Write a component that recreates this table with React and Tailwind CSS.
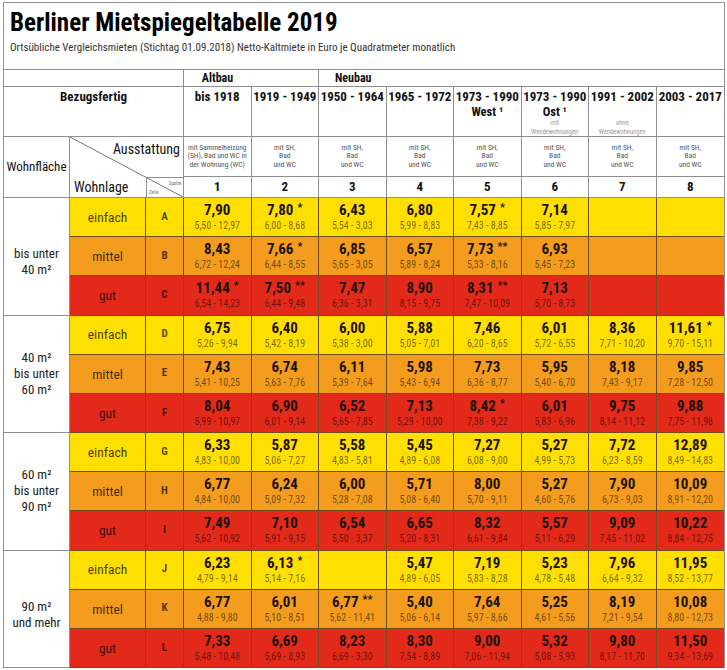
const YEARS = [
  { y: "bis 1918" },
  { y: "1919 - 1949" },
  { y: "1950 - 1964" },
  { y: "1965 - 1972" },
  { y: "1973 - 1990", sub: "West ¹" },
  { y: "1973 - 1990", sub: "Ost ¹", note: "mit" },
  { y: "1991 - 2002", note: "ohne" },
  { y: "2003 - 2017" },
];

const LAGE = {
  einfach: "bg-[#FFDF00]",
  mittel: "bg-[#F39C1E]",
  gut: "bg-[#E3291A]",
};

// [wert, sterne, spanne]
const GROUPS = [
  {
    label: ["bis unter", "40 m²"],
    rows: [
      ["einfach", "A", [["7,90", "", "5,50 - 12,97"], ["7,80", "*", "6,00 - 8,68"], ["6,43", "", "5,54 - 3,03"], ["6,80", "", "5,99 - 8,83"], ["7,57", "*", "7,43 - 8,85"], ["7,14", "", "5,85 - 7,97"], null, null]],
      ["mittel", "B", [["8,43", "", "6,72 - 12,24"], ["7,66", "*", "6,44 - 8,55"], ["6,85", "", "5,65 - 3,05"], ["6,57", "", "5,89 - 8,24"], ["7,73", "**", "5,33 - 8,16"], ["6,93", "", "5,45 - 7,23"], null, null]],
      ["gut", "C", [["11,44", "*", "6,54 - 14,23"], ["7,50", "**", "6,44 - 9,48"], ["7,47", "", "6,36 - 3,31"], ["8,90", "", "8,15 - 9,75"], ["8,31", "**", "7,47 - 10,09"], ["7,13", "", "5,70 - 8,73"], null, null]],
    ],
  },
  {
    label: ["40 m²", "bis unter", "60 m²"],
    rows: [
      ["einfach", "D", [["6,75", "", "5,26 - 9,94"], ["6,40", "", "5,42 - 8,19"], ["6,00", "", "5,38 - 3,00"], ["5,88", "", "5,05 - 7,01"], ["7,46", "", "6,20 - 8,65"], ["6,01", "", "5,72 - 6,55"], ["8,36", "", "7,71 - 10,20"], ["11,61", "*", "9,70 - 15,11"]]],
      ["mittel", "E", [["7,43", "", "5,41 - 10,25"], ["6,74", "", "5,63 - 7,76"], ["6,11", "", "5,39 - 7,64"], ["5,98", "", "5,43 - 6,94"], ["7,73", "", "6,36 - 8,77"], ["5,95", "", "5,40 - 6,70"], ["8,18", "", "7,43 - 9,17"], ["9,85", "", "7,28 - 12,50"]]],
      ["gut", "F", [["8,04", "", "5,99 - 10,97"], ["6,90", "", "6,01 - 9,14"], ["6,52", "", "5,65 - 7,85"], ["7,13", "", "5,29 - 10,00"], ["8,42", "*", "7,38 - 9,22"], ["6,01", "", "5,83 - 6,96"], ["9,75", "", "8,14 - 11,12"], ["9,88", "", "7,75 - 11,98"]]],
    ],
  },
  {
    label: ["60 m²", "bis unter", "90 m²"],
    rows: [
      ["einfach", "G", [["6,33", "", "4,83 - 10,00"], ["5,87", "", "5,06 - 7,27"], ["5,58", "", "4,83 - 5,81"], ["5,45", "", "4,89 - 6,08"], ["7,27", "", "6,08 - 9,00"], ["5,27", "", "4,99 - 5,73"], ["7,72", "", "6,23 - 8,59"], ["12,89", "", "8,49 - 14,83"]]],
      ["mittel", "H", [["6,77", "", "4,84 - 10,00"], ["6,24", "", "5,09 - 7,32"], ["6,00", "", "5,28 - 7,08"], ["5,71", "", "5,08 - 6,40"], ["8,00", "", "5,70 - 9,11"], ["5,27", "", "4,60 - 5,76"], ["7,90", "", "6,73 - 9,03"], ["10,09", "", "8,91 - 12,20"]]],
      ["gut", "I", [["7,49", "", "5,62 - 10,92"], ["7,10", "", "5,91 - 9,15"], ["6,54", "", "5,50 - 3,37"], ["6,65", "", "5,20 - 8,31"], ["8,32", "", "6,61 - 9,84"], ["5,57", "", "5,11 - 6,29"], ["9,09", "", "7,45 - 11,02"], ["10,22", "", "8,84 - 12,75"]]],
    ],
  },
  {
    label: ["90 m²", "und mehr"],
    rows: [
      ["einfach", "J", [["6,23", "", "4,79 - 9,14"], ["6,13", "*", "5,14 - 7,16"], null, ["5,47", "", "4,89 - 6,05"], ["7,19", "", "5,83 - 8,28"], ["5,23", "", "4,78 - 5,48"], ["7,96", "", "6,64 - 9,32"], ["11,95", "", "8,52 - 13,77"]]],
      ["mittel", "K", [["6,77", "", "4,88 - 9,80"], ["6,01", "", "5,10 - 8,51"], ["6,77", "**", "5,62 - 11,41"], ["5,40", "", "5,06 - 6,14"], ["7,64", "", "5,97 - 8,66"], ["5,25", "", "4,61 - 5,56"], ["8,19", "", "7,21 - 9,54"], ["10,08", "", "8,80 - 12,73"]]],
      ["gut", "L", [["7,33", "", "5,48 - 10,48"], ["6,69", "", "5,69 - 8,93"], ["8,23", "", "6,69 - 3,30"], ["8,30", "", "7,54 - 8,89"], ["9,00", "", "7,06 - 11,94"], ["5,32", "", "5,08 - 5,93"], ["9,80", "", "8,17 - 11,70"], ["11,50", "", "9,34 - 13,69"]]],
    ],
  },
];

function Wert({ cell, last, lage }) {
  const edge = last ? "" : "border-r";
  return (
    <div className={`${LAGE[lage]} ${edge} flex flex-col items-center justify-center border-b border-[#6e4d1c]`}>
      {cell && (
        <>
          <div className="text-[15px] font-bold leading-[15px] text-[#1c1208]">
            {cell[0]}
            {cell[1] && <span className="ml-[4px] align-top text-[11px] leading-[10px]">{cell[1]}</span>}
          </div>
          <div className="mt-[2px] text-[10px] leading-[11px] text-black/55">{cell[2]}</div>
        </>
      )}
    </div>
  );
}

export default function App() {
  const gray = "border-[#8f8f8f]";

  return (
    <div className="min-h-[670px] bg-white font-['Roboto_Condensed','Liberation_Sans',sans-serif] text-[#111]">
      <div className={`ml-[3px] mt-[2px] w-[722px] border-x border-t ${gray}`}>
        {/* TITEL */}
        <div className={`h-[67px] border-b ${gray} pl-[6px] pt-[6px]`}>
          <h1 className="text-[25px] font-bold leading-[28px] text-black">Berliner Mietspiegeltabelle 2019</h1>
          <p className="mt-[4px] text-[11px] leading-[14px] text-[#333]">
            Ortsübliche Vergleichsmieten (Stichtag 01.09.2018) Netto-Kaltmiete in Euro je Quadratmeter monatlich
          </p>
        </div>

        {/* TABELLE */}
        <div className="grid h-[598px] grid-cols-[66px_76px_38px_repeat(8,minmax(0,1fr))] grid-rows-[17px_50px_40px_21px_repeat(12,minmax(0,1fr))]">
          {/* Zeile 1: Altbau / Neubau */}
          <div className={`col-span-3 border-r border-b ${gray}`} />
          <div className={`col-span-2 flex items-center border-r border-b ${gray}`}>
            <span className="w-1/2 text-center text-[12px] font-bold">Altbau</span>
          </div>
          <div className={`col-span-6 flex items-center border-b ${gray} pl-[16px] text-[12px] font-bold`}>Neubau</div>

          {/* Zeile 2: Bezugsfertig */}
          <div className={`col-span-3 border-r border-b ${gray} pt-[3px] text-center text-[13px] font-bold leading-[14px]`}>
            Bezugsfertig
          </div>
          {YEARS.map((c, i) => (
            <div
              key={i}
              className={`flex flex-col items-center ${i < 7 ? "border-r" : ""} border-b ${gray} pt-[2px] text-center`}
            >
              <div className="whitespace-nowrap text-[13px] font-bold leading-[15px]">{c.y}</div>
              <div className="text-[12.5px] font-bold leading-[15px]">{c.sub || "\u00a0"}</div>
              {c.note && (
                <div className="text-[6.5px] leading-[9px] text-[#9a9a9a]">
                  {c.note}
                  <br />
                  Wendewohnungen
                </div>
              )}
            </div>
          ))}

          {/* Zeile 3 + 4: Ausstattung / Wohnlage */}
          <div className={`row-span-2 flex items-center justify-center border-r border-b ${gray} text-[13px]`}>
            Wohnfläche
          </div>
          <div className={`relative col-span-2 row-span-2 grid grid-cols-[76px_38px] grid-rows-[40px_21px] border-r border-b ${gray}`}>
            <svg className="pointer-events-none absolute inset-0 h-full w-full" viewBox="0 0 114 61" preserveAspectRatio="none">
              <line x1="0" y1="0" x2="114" y2="61" stroke="#555" strokeWidth="0.8" />
            </svg>
            <div className="col-span-2 pr-[4px] pt-[3px] text-right text-[14px] leading-[18px]">Ausstattung</div>
            <div className="flex items-end pb-[2px] pl-[4px] text-[14px] leading-[18px]">Wohnlage</div>
            <div className={`relative border-t border-l ${gray} text-[5px] leading-[6px] text-[#777]`}>
              <span className="absolute right-[3px] top-[2px]">Spalte</span>
              <span className="absolute bottom-[3px] left-[2px]">Zeile</span>
            </div>
          </div>
          {YEARS.map((c, i) => (
            <div
              key={i}
              className={`flex flex-col items-center justify-center ${i < 7 ? "border-r" : ""} border-b ${gray} text-center text-[7.5px] leading-[8.5px] text-[#555]`}
            >
              {i === 0 ? (
                <>
                  <span>mit Sammelheizung</span>
                  <span>(SH), Bad und WC in</span>
                  <span>der Wohnung (WC)</span>
                </>
              ) : (
                <>
                  <span>mit SH,</span>
                  <span>Bad</span>
                  <span>und WC</span>
                </>
              )}
            </div>
          ))}
          {YEARS.map((c, i) => (
            <div
              key={i}
              className={`flex items-center justify-center ${i < 7 ? "border-r" : ""} border-b ${gray} text-[13px] font-bold`}
            >
              {i + 1}
            </div>
          ))}

          {/* Daten */}
          {GROUPS.map((g, gi) => (
            <div key={gi} className="contents">
              <div className={`row-span-3 flex flex-col items-center justify-center border-r border-b ${gray} bg-white text-[13px] leading-[16px] text-[#222] ${g.label.length === 2 ? "pt-[12px]" : ""}`}>
                {g.label.map((t) => (
                  <span key={t}>{t}</span>
                ))}
              </div>
              {g.rows.map(([lage, z, cells]) => (
                <div key={z} className="contents">
                  <div className={`${LAGE[lage]} flex items-center justify-center border-r border-b border-[#6e4d1c] text-[13.5px] text-black/75`}>
                    {lage}
                  </div>
                  <div className={`${LAGE[lage]} flex items-center justify-center border-r border-b border-[#6e4d1c] text-[11px] font-bold text-black/70`}>
                    {z}
                  </div>
                  {cells.map((c, ci) => (
                    <Wert key={ci} cell={c} last={ci === 7} lage={lage} />
                  ))}
                </div>
              ))}
            </div>
          ))}
        </div>
      </div>
    </div>
  );
}
